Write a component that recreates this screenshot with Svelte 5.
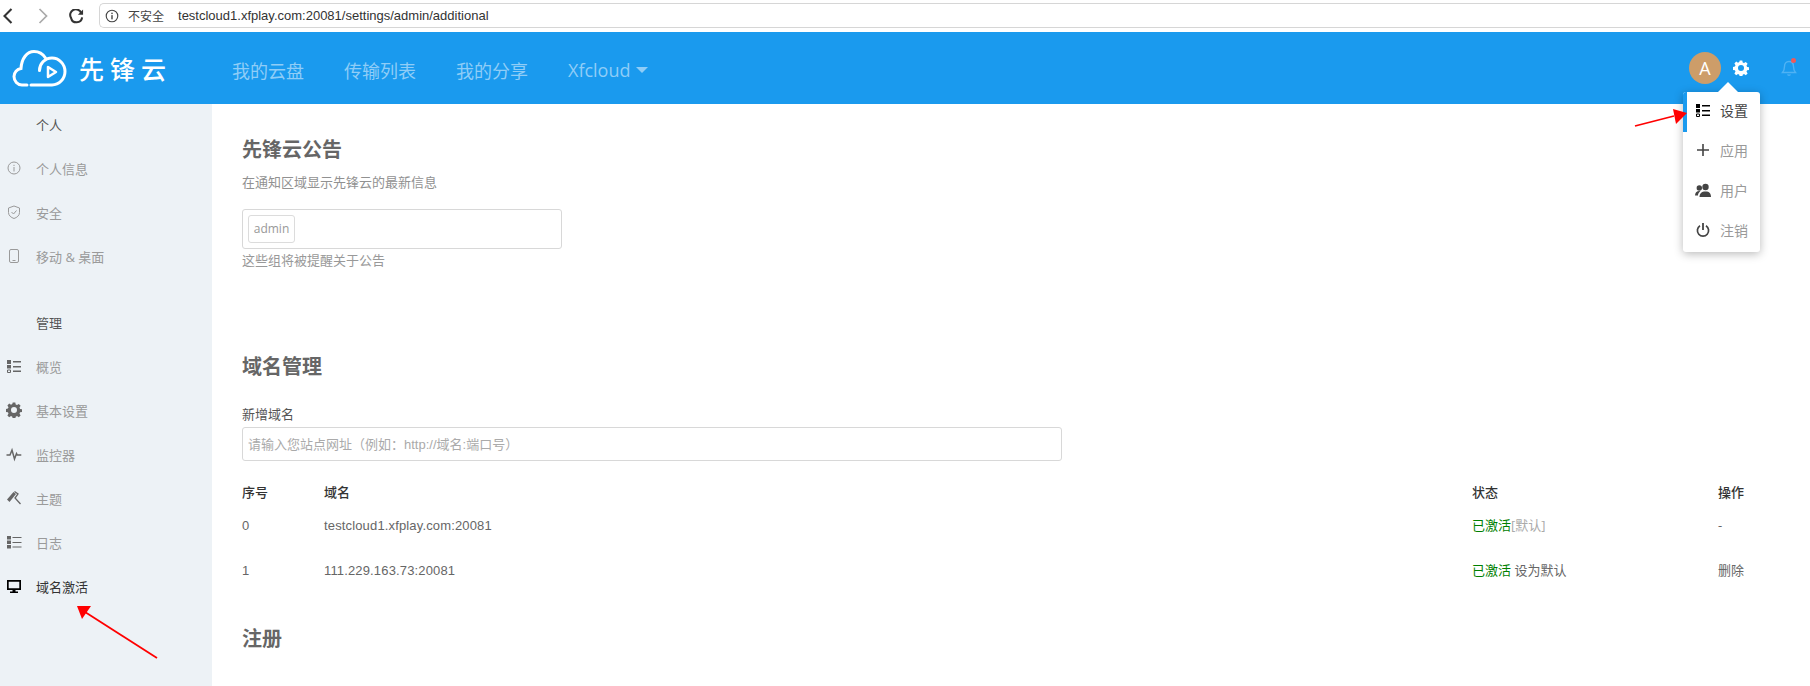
<script>
  const personal = [
    { label: '个人信息', icon: 'info' },
    { label: '安全', icon: 'shield' },
    { label: '移动 & 桌面', icon: 'phone' }
  ];
  const admin = [
    { label: '概览', icon: 'list' },
    { label: '基本设置', icon: 'gear' },
    { label: '监控器', icon: 'pulse' },
    { label: '主题', icon: 'brush' },
    { label: '日志', icon: 'logs' },
    { label: '域名激活', icon: 'monitor', active: true }
  ];
  const menu = [
    { label: '设置', icon: 'list', active: true },
    { label: '应用', icon: 'plus' },
    { label: '用户', icon: 'users' },
    { label: '注销', icon: 'power' }
  ];
</script>

{#snippet icon(name)}
  <svg class="ic" viewBox="0 0 16 16" width="16" height="16" aria-hidden="true">
    {#if name === 'info'}
      <circle cx="8" cy="8" r="6" fill="none" stroke="currentColor" stroke-width="1" />
      <rect x="7.5" y="7" width="1" height="4.5" fill="currentColor" />
      <rect x="7.5" y="4.8" width="1" height="1.2" fill="currentColor" />
    {:else if name === 'shield'}
      <path d="M8 2l5.5 2v4.5c0 3-2.5 5-5.5 6-3-1-5.5-3-5.5-6V4z" fill="none" stroke="currentColor" />
      <path d="M5.5 8l2 2 3-3.5" fill="none" stroke="currentColor" />
    {:else if name === 'phone'}
      <rect x="3.5" y="1.5" width="9" height="13" rx="1.5" fill="none" stroke="currentColor" />
      <rect x="6.5" y="12" width="3" height="1" fill="currentColor" />
    {:else if name === 'list'}
      <path d="M1 2h4v4H1zM1 7h4v3.5H1z" fill="currentColor" />
      <path d="M1.5 12h3v2.5h-3z" fill="none" stroke="currentColor" />
      <path d="M7 3h8v1.6H7zM7 8h8v1.6H7zM7 12.500h8v1.6H7z" fill="currentColor" />
    {:else if name === 'logs'}
      <path d="M1 2h4v3.500H1zM1 6.500h4v3.500H1zM1 11h4v3.500H1z" fill="currentColor" />
      <path d="M6.500 3h9v1H6.500zM6.500 8h9v1H6.500zM6.500 12.500h9v1H6.500z" fill="currentColor" />
    {:else if name === 'gear'}
      <path fill-rule="evenodd" fill="currentColor" d="M6.700.5h2.600l.4 2 1.300.6 1.800-1.100 1.800 1.800-1.100 1.800.6 1.300 2 .4v2.600l-2 .4-.6 1.300 1.100 1.800-1.800 1.800-1.800-1.100-1.300.6-.4 2H6.700l-.4-2-1.300-.6-1.800 1.100-1.800-1.800 1.100-1.800-.6-1.300-2-.4V6.900l2-.4.6-1.300L1.400 3.400l1.800-1.800L5 2.700l1.300-.6zM8 5a3 3 0 100 6 3 3 0 000-6z" />
    {:else if name === 'pulse'}
      <path d="M.5 9h3.500l2-5 2.500 9 2-5.500.8 1.500h4" fill="none" stroke="currentColor" stroke-width="1.500" />
    {:else if name === 'brush'}
      <path d="M1 9.500l6.500-7.500 2.500 2-6.500 8z" fill="currentColor" />
      <path d="M8.500 1.500l3.500 2.500-3 4 5.500 6" fill="none" stroke="currentColor" stroke-width="1.300" />
    {:else if name === 'monitor'}
      <path fill-rule="evenodd" fill="currentColor" d="M1 2h14v10H9.500v1.500H12V15H4v-1.500h2.500V12H1zM2.700 3.700v6.600h10.600V3.700z" />
    {:else if name === 'plus'}
      <path d="M7.200 2h1.600v5.200H14v1.600H8.800V14H7.200V8.800H2V7.200h5.200z" fill="currentColor" />
    {:else if name === 'users'}
      <circle cx="10.500" cy="5" r="3.200" fill="currentColor" />
      <circle cx="4.300" cy="6" r="2.700" fill="currentColor" />
      <path d="M4.500 15c0-3.500 2-5.500 6-5.500s5.500 2 5.500 5.500zM0 13.500c0-2.500 1.500-4.500 4.500-4.500l.8.300C3.800 10.500 3 12 3 13.500z" fill="currentColor" />
    {:else if name === 'power'}
      <path d="M5 3.800a5.600 5.600 0 106 0" fill="none" stroke="currentColor" stroke-width="1.700" />
      <rect x="7.100" y="1" width="1.800" height="7" fill="currentColor" />
    {/if}
  </svg>
{/snippet}

<div class="page">
  <div class="browser">
    <svg class="chev back" viewBox="0 0 16 20" width="14" height="18"><path d="M12 2L4 10l8 8" fill="none" stroke="#333" stroke-width="2.400" /></svg>
    <svg class="chev fwd" viewBox="0 0 16 20" width="14" height="18"><path d="M4 2l8 8-8 8" fill="none" stroke="#aaa" stroke-width="2" /></svg>
    <svg class="reload" viewBox="0 0 16 16" width="15" height="15"><path d="M13 4.500A6 6 0 102.200 9.500 6 6 0 0014 9" fill="none" stroke="#333" stroke-width="2.200" /><path d="M9.500 6H15V.5z" fill="#333" /></svg>
    <div class="urlbar">
      <svg viewBox="0 0 16 16" width="14" height="14"><circle cx="8" cy="8" r="6.600" fill="none" stroke="#444" stroke-width="1.300" /><rect x="7.200" y="7" width="1.600" height="4.800" fill="#444" /><rect x="7.200" y="4.200" width="1.600" height="1.600" fill="#444" /></svg>
      <span class="insecure">不安全</span>
      <span class="url">testcloud1.xfplay.com:20081/settings/admin/additional</span>
    </div>
  </div>

  <header class="top">
    <div class="logo">
      <svg viewBox="0 0 56 42" width="56" height="42" aria-hidden="true">
        <path d="M15 38H10C5.500 38 2 34 2 29.500c0-4 3-7.500 7-8 .5-10 6-17 13-17 5 0 9 2.500 11.500 6.500" fill="none" stroke="#fff" stroke-width="3" stroke-linecap="round" />
        <path d="M19 38h21c7 0 13-6 13-13.500S47 11 40 11c-7.500 0-12.500 6-12.500 12.500" fill="none" stroke="#fff" stroke-width="3" stroke-linecap="round" />
        <path d="M36 20v10l8-5z" fill="none" stroke="#fff" stroke-width="2.500" stroke-linejoin="round" />
      </svg>
      <span class="brand">先锋云</span>
    </div>
    <nav class="nav">
      <span>我的云盘</span>
      <span>传输列表</span>
      <span>我的分享</span>
      <span class="more">Xfcloud<i class="caret"></i></span>
    </nav>
    <div class="actions">
      <div class="avatar">A</div>
      <svg class="gear" viewBox="0 0 16 16" width="16" height="16"><path fill-rule="evenodd" fill="#fff" d="M6.700.5h2.600l.4 2 1.300.6 1.800-1.100 1.800 1.800-1.100 1.800.6 1.300 2 .4v2.600l-2 .4-.6 1.300 1.100 1.800-1.800 1.800-1.800-1.100-1.300.6-.4 2H6.700l-.4-2-1.300-.6-1.800 1.100-1.800-1.800 1.100-1.800-.6-1.300-2-.4V6.900l2-.4.6-1.300L1.400 3.400l1.800-1.800L5 2.700l1.300-.6zM8 5a3 3 0 100 6 3 3 0 000-6z" /></svg>
      <div class="bell">
        <svg viewBox="0 0 16 18" width="16" height="18"><path d="M8 2.500c-3 0-4.500 2.200-4.500 5 0 3-.8 4.500-2 6h13c-1.200-1.500-2-3-2-6 0-2.800-1.500-5-4.500-5zM6.500 15.500c.5 1 2.500 1 3 0" fill="none" stroke="#4fb2f4" stroke-width="1.400" /></svg>
        <span class="dot"></span>
      </div>
    </div>
    <div class="popover">
      <span class="notch"></span>
      {#each menu as m}
        <div class="mi" class:on={m.active}>
          {@render icon(m.icon)}
          <span>{m.label}</span>
        </div>
      {/each}
    </div>
  </header>

  <div class="body">
    <aside class="side">
      <div class="group">个人</div>
      {#each personal as it}
        <div class="item">{@render icon(it.icon)}<span>{it.label}</span></div>
      {/each}
      <div class="group second">管理</div>
      {#each admin as it}
        <div class="item" class:on={it.active}>{@render icon(it.icon)}<span>{it.label}</span></div>
      {/each}
    </aside>

    <main class="main">
      <section class="s1">
        <h2>先锋云公告</h2>
        <p class="desc">在通知区域显示先锋云的最新信息</p>
        <div class="tags"><span class="tag">admin</span></div>
        <p class="hint">这些组将被提醒关于公告</p>
      </section>

      <section class="s2">
        <h2>域名管理</h2>
        <label class="lab" for="dom">新增域名</label>
        <input id="dom" class="inp" placeholder="请输入您站点网址（例如：http://域名:端口号）" />
        <div class="row head">
          <span>序号</span><span>域名</span><span>状态</span><span>操作</span>
        </div>
        <div class="row">
          <span class="val">0</span><span class="val">testcloud1.xfplay.com:20081</span>
          <span><em>已激活</em><b>[默认]</b></span><span>-</span>
        </div>
        <div class="row">
          <span class="val">1</span><span class="val">111.229.163.73:20081</span>
          <span><em>已激活</em> 设为默认</span><span>删除</span>
        </div>
      </section>

      <section class="s3"><h2>注册</h2></section>
    </main>
  </div>

  <svg class="arrows" width="1810" height="686" viewBox="0 0 1810 686" aria-hidden="true">
    <path d="M1635 126L1674 116" stroke="#f00" stroke-width="1.800" />
    <path d="M1673 109l14 4-11 11z" fill="#f00" />
    <path d="M157 658L85 612" stroke="#f00" stroke-width="1.800" />
    <path d="M77 606h14l-9 13z" fill="#f00" />
  </svg>
</div>

<style>
  :global(body) {
    margin: 0;
    background: #fff;
  }
  .page {
    position: relative;
    width: 1810px;
    height: 686px;
    overflow: hidden;
    font-family: "Open Sans", "Noto Sans CJK SC", sans-serif;
    font-size: 13px;
    color: #666;
  }
  .browser {
    height: 32px;
    display: flex;
    align-items: center;
    box-sizing: border-box;
    background: #fff;
  }
  .chev { flex: none; }
  .back { margin-left: 1px; }
  .fwd { margin-left: 21px; }
  .reload { flex: none; margin-left: 19px; }
  .urlbar {
    flex: 1;
    height: 25px;
    box-sizing: border-box;
    margin: -1px 0 0 15px;
    border: 1px solid #d6d6d6;
    border-right: 0;
    border-radius: 5px 0 0 5px;
    display: flex;
    align-items: center;
    padding-left: 5px;
    color: #444;
  }
  .insecure { margin-left: 9px; font-size: 12px; }
  .url {
    margin-left: 14px;
    font-family: "Liberation Sans", sans-serif;
    font-size: 13px;
    color: #333;
  }

  .top {
    position: relative;
    height: 72px;
    background: #1a9aee;
    display: flex;
    align-items: center;
  }
  .logo {
    display: flex;
    align-items: center;
    width: 232px;
    padding-left: 12px;
    box-sizing: border-box;
  }
  .brand {
    margin-left: 11px;
    color: #fff;
    font-size: 25px;
    font-weight: 500;
    letter-spacing: 6px;
    white-space: nowrap;
  }
  .nav {
    display: flex;
    gap: 40px;
    padding-top: 3px;
    color: #8fcdf7;
    font-size: 18px;
  }
  .more { display: flex; align-items: center; }
  .caret {
    margin-left: 5px;
    border: 6px solid transparent;
    border-top: 6px solid #8fcdf7;
    border-bottom: 0;
  }
  .actions {
    margin-left: auto;
    display: flex;
    align-items: center;
    padding-right: 13px;
  }
  .avatar {
    width: 32px;
    height: 32px;
    border-radius: 50%;
    background: #cd9d69;
    color: #fff;
    font-size: 18px;
    text-align: center;
    line-height: 32px;
  }
  .gear { margin-left: 12px; }
  .bell { position: relative; margin-left: 32px; height: 18px; }
  .dot {
    position: absolute;
    right: 1px;
    top: -1px;
    width: 5px;
    height: 5px;
    border-radius: 50%;
    background: #ef5a5a;
  }
  .popover {
    position: absolute;
    left: 1683px;
    top: 60px;
    width: 77px;
    height: 160px;
    background: #fff;
    border-radius: 3px;
    box-shadow: 0 2px 10px rgba(0, 0, 0, 0.28);
    z-index: 3;
  }
  .notch {
    position: absolute;
    left: 35px;
    top: -10px;
    border: 10px solid transparent;
    border-top: 0;
    border-bottom: 10px solid #fff;
  }
  .mi {
    height: 40px;
    display: flex;
    align-items: center;
    padding: 0 0 4px 12px;
    color: #999;
    box-sizing: border-box;
    font-size: 14px;
  }
  .mi .ic { color: #444; margin-right: 9px; flex: none; }
  .mi.on { color: #444; border-left: 4px solid #1a9aee; padding-left: 8px; border-radius: 3px 0 0 0; }
  .mi.on .ic { color: #000; }

  .body { display: flex; height: 582px; }
  .side {
    width: 212px;
    flex: none;
    background: #edf2f6;
  }
  .group {
    height: 44px;
    line-height: 42px;
    padding-left: 36px;
    color: #555;
  }
  .group.second { margin-top: 22px; }
  .item {
    height: 44px;
    display: flex;
    align-items: center;
    box-sizing: border-box;
    padding-bottom: 4px;
    color: #9a9a9a;
  }
  .item .ic { margin: 0 14px 0 6px; color: #666; flex: none; }
  .item:nth-child(-n+4) .ic { color: #9a9a9a; }
  .item.on { color: #333; }
  .item.on .ic { color: #000; }

  .main { flex: 1; padding: 0 28px 0 30px; min-width: 0; }
  h2 {
    margin: 0;
    font-size: 20px;
    line-height: 28px;
    font-weight: 700;
    color: #666;
  }
  .s1 { padding-top: 32px; height: 228px; box-sizing: border-box; }
  .desc { margin: 8px 0 0; line-height: 20px; color: #919191; }
  .tags {
    width: 320px;
    height: 40px;
    box-sizing: border-box;
    margin-top: 17px;
    border: 1px solid #d8d8d8;
    border-radius: 3px;
    padding: 5px;
  }
  .tag {
    display: block;
    width: 47px;
    height: 28px;
    line-height: 26px;
    box-sizing: border-box;
    text-align: center;
    border: 1px solid #dcdcdc;
    border-radius: 3px;
    color: #999;
    font-size: 12px;
  }
  .hint { margin: 1px 0 0; line-height: 20px; color: #999; }

  .s2 { height: 293px; padding-top: 21px; box-sizing: border-box; }
  .lab { display: block; margin-top: 24px; line-height: 18px; color: #555; }
  .inp {
    display: block;
    width: 820px;
    height: 34px;
    box-sizing: border-box;
    margin-top: 4px;
    padding: 0 5px;
    border: 1px solid #d8d8d8;
    border-radius: 3px;
    font: inherit;
    font-family: "Liberation Sans", "Noto Sans CJK SC", sans-serif;
    outline: 0;
  }
  .inp::placeholder { color: #aaa; opacity: 1; }
  .row {
    display: grid;
    grid-template-columns: 82px 1148px 246px 1fr;
    height: 45px;
    align-items: center;
    color: #666;
    white-space: nowrap;
  }
  .val {
    padding-top: 2px;
    font-family: "Liberation Sans", sans-serif;
    letter-spacing: 0.15px;
  }
  .row.head { height: 22px; margin-top: 19px; color: #333; font-weight: 500; }
  .row em { font-style: normal; color: #008000; }
  .row b { font-weight: 400; color: #aaa; }

  .arrows { position: absolute; left: 0; top: 0; pointer-events: none; z-index: 5; }
</style>
